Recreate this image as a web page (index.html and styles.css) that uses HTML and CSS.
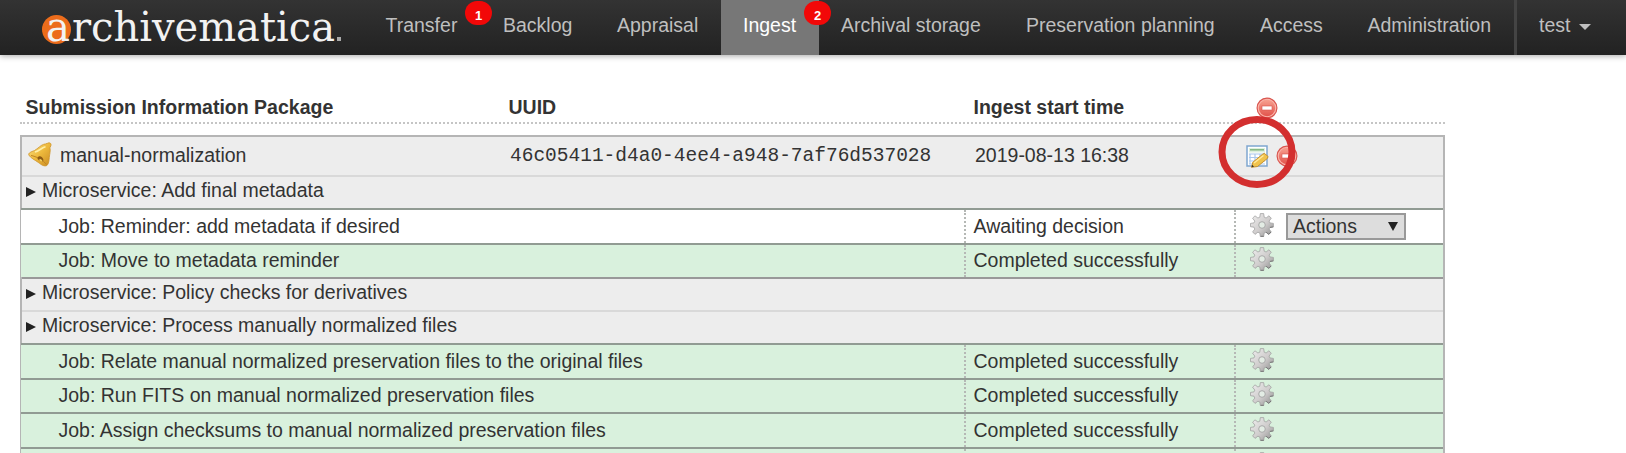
FILE: index.html
```
<!DOCTYPE html>
<html lang="en">
<head>
<meta charset="utf-8">
<title>Archivematica - Ingest</title>
<link rel="stylesheet" href="styles.css">
</head>
<body>
<svg class="defs" width="0" height="0">
  <defs>
    <linearGradient id="gearFill" x1="0" y1="0" x2="1" y2="1"><stop offset="0" stop-color="#f0f0f0"/><stop offset=".55" stop-color="#cfcccc"/><stop offset="1" stop-color="#8d8d8d"/></linearGradient>
    <linearGradient id="bellFill" x1="0" y1="0" x2="1" y2="1"><stop offset="0" stop-color="#fbe283"/><stop offset=".5" stop-color="#edb93c"/><stop offset="1" stop-color="#c98a22"/></linearGradient>
    <linearGradient id="redFill" x1="0" y1="0" x2="0" y2="1"><stop offset="0" stop-color="#f7a08f"/><stop offset="1" stop-color="#e2544c"/></linearGradient>
    <symbol id="gear" viewBox="0 0 24 24">
      <path d="M10.300.6h3.400l.5 3.600 1.900.8 2.800-2.200 2.400 2.400-2.200 2.900.8 1.800 3.500.5v3.300l-3.500.5-.8 1.900 2.200 2.800-2.400 2.500-2.800-2.200-1.900.8-.5 3.500h-3.400l-.5-3.500-1.900-.8-2.900 2.200-2.400-2.500 2.200-2.800-.8-1.900-3.500-.5v-3.300l3.500-.5.8-1.800-2.200-2.900L5 2.800 7.900 5l1.900-.8z" fill="url(#gearFill)" stroke="#9a9a9a" stroke-width=".7"/>
      <path d="M21 19l-2.200 2.300-2.700-2M13.700 23.300h-3M23.400 13.900l-3.300.6" fill="none" stroke="#777" stroke-width="1"/>
      <circle cx="12" cy="12" r="3.300" fill="#e3ece4" stroke="#a9a9a9"/>
    </symbol>
    <symbol id="minus" viewBox="0 0 22 22">
      <circle cx="11" cy="11" r="9.900" fill="#fbb5ab" stroke="#d9564f" stroke-width="1.200"/>
      <circle cx="11" cy="11" r="8.200" fill="url(#redFill)"/>
      <rect x="6" y="9" width="10" height="4" fill="#fff" stroke="#d9534b" stroke-width=".6"/>
    </symbol>
  </defs>
</svg>
<header class="topbar">
  <svg class="logo" width="304" height="36" viewBox="0 0 304 36">
    <circle cx="14.500" cy="21.500" r="14.500" fill="#ec6c1b"/>
    <text class="logo-text"><tspan x="4" y="33" textLength="24" lengthAdjust="spacingAndGlyphs">a</tspan><tspan x="30" y="33" textLength="263" lengthAdjust="spacingAndGlyphs">rchivematica</tspan></text>
    <rect x="295" y="29" width="4" height="4" fill="#aaa"/>
  </svg>
  <nav class="nav">
    <a class="tab transfer">Transfer<span class="badge">1</span></a>
    <a class="tab backlog">Backlog</a>
    <a class="tab appraisal">Appraisal</a>
    <a class="tab active">Ingest<span class="badge">2</span></a>
    <a class="tab storage">Archival storage</a>
    <a class="tab planning">Preservation planning</a>
    <a class="tab access">Access</a>
    <a class="tab admin">Administration</a>
    <a class="tab user">test<span class="caret"></span></a>
  </nav>
</header>
<main class="content">
  <div class="columns head">
    <div>Submission Information Package</div><div>UUID</div><div>Ingest start time</div>
    <div class="head-action"><svg class="minus"><use href="#minus"/></svg></div>
  </div>
  <section class="sip">
    <div class="columns package">
      <div class="name"><svg class="bell" viewBox="0 0 24 25">
        <path d="M19.500 1.300c2.400-1.200 4.200.2 3.300 2.600l-.9 1.900c.9 3-.3 6-.6 9.700-.3 3-.5 6.300-2.400 8-2.500 1.200-5.500-.5-8.500-3C7 18 2.500 16 .8 13c-.5-2.300 2.200-3 5.700-4.500C10 6.500 12.500 3.300 15.500 2.400c1.500-.4 2.500-.5 4-1.100z" fill="url(#bellFill)" stroke="#cf942a" stroke-width=".8"/>
        <path d="M3 13.500c5 .8 12 4.500 15.500 9" fill="none" stroke="#c08524" stroke-width="1"/>
        <path d="M9.500 16c.5-2 3-2.300 4.500-.8s2 3.500.5 4-5-1.200-5-3.200z" fill="#8c5a14"/>
        <path d="M11.500 17.500l2.500 1.500" stroke="#f4cf5c" stroke-width="1.600"/>
        <path d="M7 10c4-1 7-4.500 10.500-5.300" fill="none" stroke="#fff0a8" stroke-width="1.600"/>
      </svg>manual-normalization</div>
      <div class="uuid">46c05411-d4a0-4ee4-a948-7af76d537028</div>
      <div>2019-08-13 16:38</div>
      <div class="actions">
        <svg class="edit" viewBox="0 0 23 23">
          <rect x="1" y="1" width="20" height="20" fill="#fff" stroke="#7fa6cf" stroke-width="1.500"/>
          <rect x="3" y="3" width="16" height="4.500" fill="#dcefdc"/><path d="M4 4.800h14" stroke="#82b681" stroke-width="1.500"/>
          <path d="M3 9h16M3 12.500h16M3 16h16M3 19h16M4 8.500v11M9 8.500v11M14 8.500v11" stroke="#a9c8ec" stroke-width="1.200"/>
          <path d="M5.500 22.300l1.300-5 9.700-8 1.800-1 3.800 3.200-.8 2-9.800 8z" fill="#f0c34c" stroke="#c28a25" stroke-width=".9"/>
          <path d="M8 18l9.500-7.500" stroke="#ffe99b" stroke-width="1.500"/><path d="M5.500 22.300l.8-2.500 1.700 2z" fill="#333"/>
        </svg>
        <svg class="minus"><use href="#minus"/></svg>
        <svg class="ring" viewBox="0 0 78 74"><ellipse cx="39" cy="37" rx="35" ry="32.500" fill="none" stroke="#d32f2f" stroke-width="7"/></svg>
      </div>
    </div>
    <div class="service light"><span class="arrow"></span>Microservice: Add final metadata</div>
    <div class="job waiting low"><div>Job: Reminder: add metadata if desired</div><div>Awaiting decision</div><div><svg class="gear"><use href="#gear"/></svg><span class="select">Actions<i class="down"></i></span></div></div>
    <div class="job short"><div>Job: Move to metadata reminder</div><div>Completed successfully</div><div><svg class="gear"><use href="#gear"/></svg></div></div>
    <div class="service"><span class="arrow"></span>Microservice: Policy checks for derivatives</div>
    <div class="service light"><span class="arrow"></span>Microservice: Process manually normalized files</div>
    <div class="job low"><div>Job: Relate manual normalized preservation files to the original files</div><div>Completed successfully</div><div><svg class="gear"><use href="#gear"/></svg></div></div>
    <div class="job short"><div>Job: Run FITS on manual normalized preservation files</div><div>Completed successfully</div><div><svg class="gear"><use href="#gear"/></svg></div></div>
    <div class="job low"><div>Job: Assign checksums to manual normalized preservation files</div><div>Completed successfully</div><div><svg class="gear"><use href="#gear"/></svg></div></div>
    <div class="job last"><div></div><div></div><div><svg class="gear"><use href="#gear"/></svg></div></div>
  </section>
</main>
</body>
</html>
```
FILE: styles.css
```
* { box-sizing: border-box; }
html, body { height: 453px; overflow: hidden; }
body { margin: 0; background: #fff; color: #333; font: 19.5px/27px "Liberation Sans", Arial, sans-serif; }
.defs { display: block; }
.topbar { height: 55px; display: flex; background: linear-gradient(#333, #222); box-shadow: 0 1px 6px rgba(0,0,0,.35); }
.logo { margin: 8px 0 0 42px; flex: none; overflow: visible; }
.logo-text { font: 41px "DejaVu Serif", serif; fill: #f2f2f2; }
.nav { display: flex; margin-left: 17px; white-space: nowrap; }
.tab { position: relative; height: 55px; padding: 12px 0 0 23px; color: #bfbfbf; flex: none; }
.transfer { width: 117px; padding-left: 22.5px; }
.backlog { width: 114px; }
.appraisal { width: 127px; }
.active { width: 98px; padding-left: 22px; background: #777; color: #fff; }
.storage { width: 184px; padding-left: 22px; }
.planning { width: 234px; }
.access { width: 108px; }
.admin { width: 169px; padding-left: 22.5px; }
.user { width: 111px; padding-left: 22px; border-left: 3px solid #444; }
.badge { position: absolute; right: -12px; top: 1px; width: 27px; height: 24px; border-radius: 12px; background: #f20808; color: #fff; font-size: 13px; font-weight: bold; line-height: 29px; text-align: center; z-index: 1; }
.caret { display: inline-block; margin-left: 9px; vertical-align: 2px; border: 6px solid transparent; border-top-color: #bfbfbf; border-bottom: 0; }
.content { width: 1445px; height: 398px; padding: 37px 0 0 20px; overflow: hidden; }
.columns { display: grid; grid-template-columns: 483px 465px 272px 1fr; }
.head { height: 32px; padding-left: 5.5px; border-bottom: 2px dotted #c5c5c5; font-weight: bold; line-height: 31px; }
.head-action { padding: 5px 0 0 10px; display: flex; }
.minus { width: 22px; height: 22px; flex: none; }
.sip { margin-top: 11px; border: 2px solid #b5b5b5; border-bottom: 0; background: #ededed; }
.package { height: 38px; padding-left: 5px; line-height: 36px; }
.name { display: flex; }
.bell { width: 24px; height: 25px; margin: 5px 8px 0 1px; }
.uuid { font-family: "Liberation Mono", monospace; line-height: 38px; }
.actions { position: relative; display: flex; padding-top: 8px; }
.edit { width: 23px; height: 23px; margin: 0 7px 0 -1px; }
.ring { position: absolute; left: -29px; top: -22px; width: 78px; height: 74px; z-index: 2; }
.service { height: 33px; border-top: 2px solid #999; padding-left: 4px; display: flex; line-height: 26px; }
.service.light { border-top-color: #d9d9d9; }
.arrow { margin: 10px 6px 0 0; border: solid transparent; border-width: 5px 0 5px 10px; border-left-color: #222; height: 0; }
.job { display: grid; grid-template-columns: 943px 270px 1fr; height: 35px; margin-left: -1px; background: #d9f1dd; border-top: 2px solid #919b93; line-height: 31px; }
.job.short { height: 34px; }
.job.low { line-height: 33px; }
.job.last { height: 6px; overflow: hidden; }
.waiting { background: #fff; }
.job > div { display: flex; padding-left: 7.5px; }
.job > div:first-child { padding-left: 37.5px; }
.job > div + div { border-left: 2px dotted #b5b8b5; }
.job > div:last-child { padding-left: 14px; }
.gear { width: 24px; height: 24px; margin-top: 3px; }
.short .gear { margin-top: 2px; }
.select { width: 120px; height: 27px; margin: 3px 0 0 12px; padding: 0 6px 0 5px; display: flex; justify-content: space-between; align-items: center; border: 2px solid #999; background: #ddd; line-height: 23px; }
.down { border: solid transparent; border-width: 9px 5px 0; border-top-color: #222; }
```
